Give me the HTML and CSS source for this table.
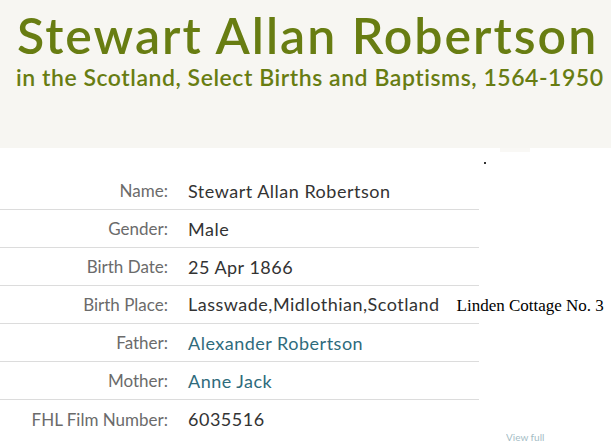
FILE: index.html
```html
<!DOCTYPE html>
<html lang="en">
<head>
<meta charset="utf-8">
<title>Stewart Allan Robertson</title>
<link rel="stylesheet" href="styles.css">
</head>
<body>
<header class="hero">
  <h1 class="hero-title">Stewart Allan Robertson</h1>
  <p class="hero-sub">in the Scotland, Select Births and Baptisms, 1564-1950</p>
  <span class="hero-tab"></span>
</header>
<main class="record">
  <span class="speck"></span>
  <div class="row"><span class="label">Name:</span><span class="value">Stewart Allan Robertson</span></div>
  <div class="row"><span class="label">Gender:</span><span class="value">Male</span></div>
  <div class="row"><span class="label">Birth Date:</span><span class="value">25 Apr 1866</span></div>
  <div class="row"><span class="label">Birth Place:</span><span class="value">Lasswade,Midlothian,Scotland<span class="note">Linden Cottage No. 3</span></span></div>
  <div class="row"><span class="label">Father:</span><span class="value link">Alexander Robertson</span></div>
  <div class="row"><span class="label">Mother:</span><span class="value link">Anne Jack</span></div>
  <div class="row last"><span class="label">FHL Film Number:</span><span class="value">6035516</span></div>
  <span class="peek">View full</span>
</main>
</body>
</html>
```
FILE: styles.css
```css
html, body {
  margin: 0;
  padding: 0;
  background: #ffffff;
  overflow: hidden;
}
body {
  font-family: Lato, "Open Sans", sans-serif;
  width: 611px;
  height: 443px;
}
.hero {
  position: relative;
  background: #f7f6f2;
  height: 148px;
  padding: 5px 0 0 17px;
  box-sizing: border-box;
}
.hero-title {
  margin: 0;
  font-size: 50px;
  line-height: 60px;
  font-weight: 600;
  color: #687d12;
  letter-spacing: 2px;
}
.hero-sub {
  margin: 0 0 0 -1px;
  font-size: 23px;
  line-height: 24px;
  font-weight: 600;
  color: #687d12;
  letter-spacing: 0.55px;
}
.hero-tab {
  position: absolute;
  left: 500px;
  top: 148px;
  width: 30px;
  height: 4px;
  background: #f9f8f5;
}
.record {
  position: relative;
  padding-top: 24px;
}
.row {
  display: grid;
  grid-template-columns: 168px 1fr;
  column-gap: 20px;
  align-items: center;
  width: 479px;
  height: 38px;
  border-bottom: 1px solid #dcdcdc;
  box-sizing: border-box;
  font-size: 17px;
}
.row.last {
  border-bottom: none;
}
.label {
  text-align: right;
  color: #6b6b6b;
  white-space: nowrap;
}
.value {
  color: #333333;
  white-space: nowrap;
  font-size: 18px;
  letter-spacing: 0.5px;
}
.value.link {
  color: #2f6b7c;
}
.note {
  margin-left: 17px;
  font-family: "Liberation Serif", serif;
  font-size: 17px;
  letter-spacing: 0;
  color: #000;
}
.speck {
  position: absolute;
  left: 484px;
  top: 14px;
  width: 2px;
  height: 2px;
  background: #333;
}
.peek {
  position: absolute;
  left: 506px;
  top: 284px;
  font-size: 10px;
  line-height: 11px;
  color: #2f6b7c;
  opacity: 0.45;
  white-space: nowrap;
}
```
